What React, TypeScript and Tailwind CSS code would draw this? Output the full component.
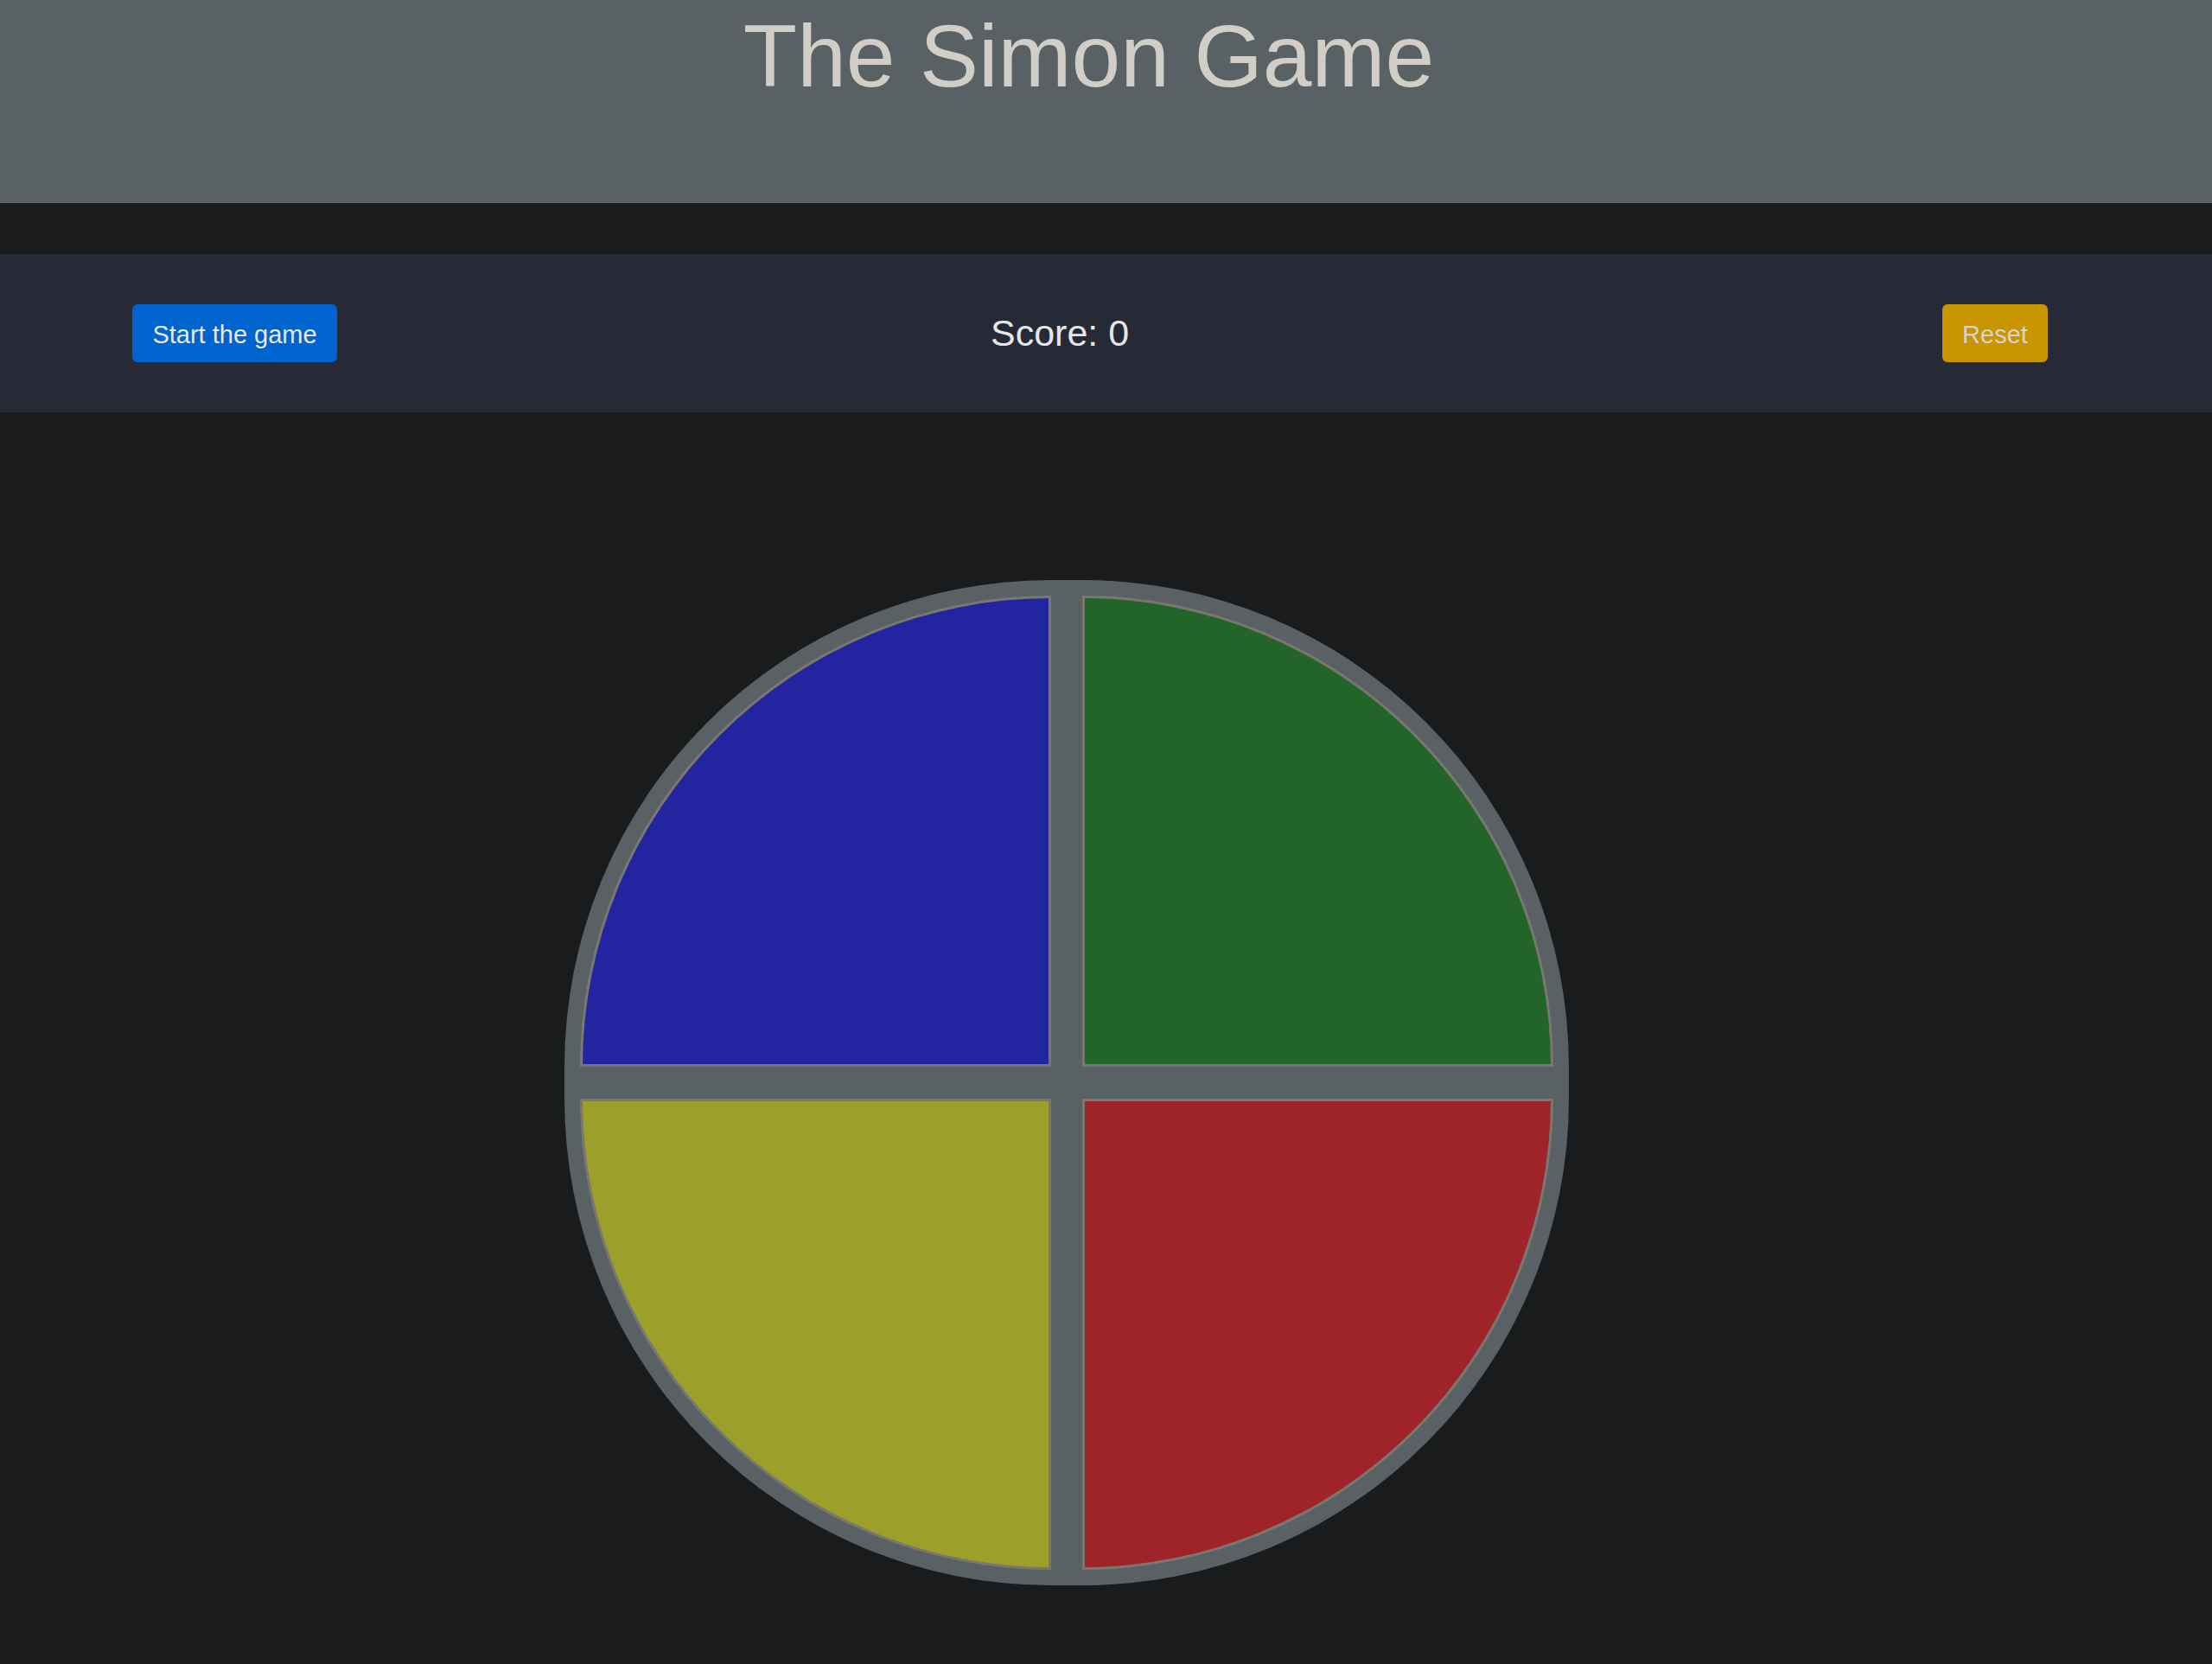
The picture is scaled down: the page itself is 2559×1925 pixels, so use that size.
import { useState } from 'react';

const pads = [
  { id: 'blue', cls: 'bg-[#2224a0] rounded-tl-[545px]' },
  { id: 'green', cls: 'bg-[#236428] rounded-tr-[545px]' },
  { id: 'yellow', cls: 'bg-[#9ca02a] rounded-bl-[545px]' },
  { id: 'red', cls: 'bg-[#9e2429] rounded-br-[545px]' },
];

export default function App() {
  const [score, setScore] = useState(0);

  return (
    <div className="min-h-screen bg-[#1a1b1d] font-['Liberation_Sans',Arial,sans-serif]">
      <header className="h-[235px] bg-[#5a6164]">
        <h1 className="pt-[4px] pr-[40px] text-center text-[102px] font-normal leading-[1.2] text-[#d1cec8]">
          The Simon Game
        </h1>
      </header>

      <div className="h-[59px]" />

      {/* controls */}
      <div className="flex h-[183px] items-center bg-[#262a37] pl-[153px] pr-[190px]">
        <button
          type="button"
          className="h-[67px] w-[237px] rounded-[6px] bg-[#0064cf] pt-[4px] text-[29px] text-[#e8e8e8]"
        >
          Start the game
        </button>
        <span className="ml-[756px] text-[43px] text-[#e6e6e6]">Score: {score}</span>
        <button
          type="button"
          onClick={() => setScore(0)}
          className="ml-auto h-[67px] w-[122px] rounded-[6px] bg-[#c89500] pt-[4px] text-[29px] text-[#d6d3cc]"
        >
          Reset
        </button>
      </div>

      {/* board */}
      <div className="pt-[194px] pb-[91px]">
        <div className="ml-[653px] grid h-[1163px] w-[1162px] grid-cols-2 gap-x-[36px] gap-y-[37px] rounded-[563px] bg-[#5a6164] p-[18px]">
          {pads.map((p) => (
            <div key={p.id} className={`border-[3px] border-[#7a7770] ${p.cls}`} />
          ))}
        </div>
      </div>
    </div>
  );
}
